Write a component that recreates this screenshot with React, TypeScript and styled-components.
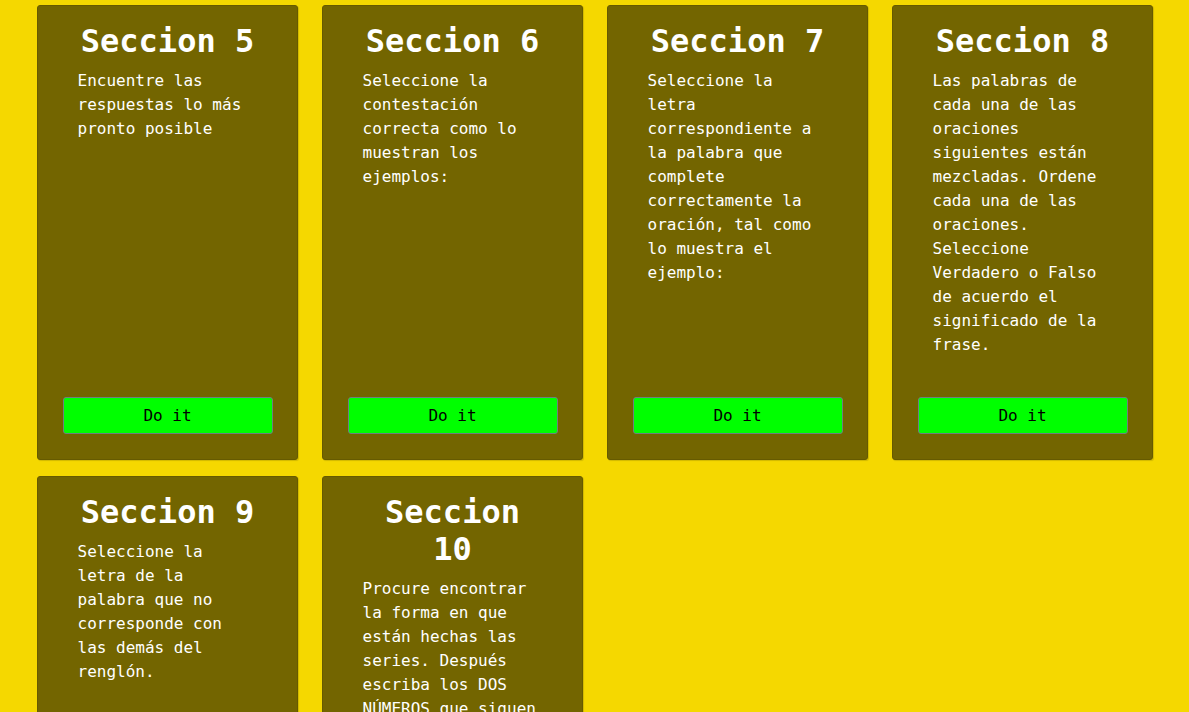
import React from "react";
import styled, { createGlobalStyle } from "styled-components";

const Global = createGlobalStyle`
  html, body {
    margin: 0;
    padding: 0;
    background: #f5d800;
    font-family: "DejaVu Sans Mono", "Liberation Mono", monospace;
  }
`;

const Grid = styled.main`
  display: grid;
  grid-template-columns: repeat(4, 261px);
  column-gap: 24px;
  row-gap: 16px;
  padding: 5px 36px 20px 37px;
`;

const Card = styled.section`
  display: flex;
  flex-direction: column;
  align-items: center;
  box-sizing: border-box;
  min-height: 455px;
  background: #736500;
  border: 1px solid #665a00;
  border-radius: 3px;
  box-shadow: 1px 1px 1px rgba(0, 0, 0, 0.15);
  color: #ffffff;
`;

const Title = styled.h2`
  width: 180px;
  margin: 17px 0 0;
  font-size: 32px;
  line-height: 37px;
  font-weight: bold;
  text-align: center;
`;

const Text = styled.p`
  width: 180px;
  margin: 9px 0 0;
  flex: 1;
  font-size: 16px;
  line-height: 24px;
`;

const Button = styled.button`
  width: 210px;
  height: 37px;
  margin: 40px 0 25px;
  background: #00ff00;
  border: 1px solid #6f7f7f;
  border-radius: 3px;
  color: #000;
  font-family: "DejaVu Sans Mono", "Liberation Mono", monospace;
  font-size: 16px;
  cursor: pointer;
`;

const sections = [
  { n: 5, text: "Encuentre las respuestas lo más pronto posible" },
  { n: 6, text: "Seleccione la contestación correcta como lo muestran los ejemplos:" },
  {
    n: 7,
    text: "Seleccione la letra correspondiente a la palabra que complete correctamente la oración, tal como lo muestra el ejemplo:",
  },
  {
    n: 8,
    text: "Las palabras de cada una de las oraciones siguientes están mezcladas. Ordene cada una de las oraciones. Seleccione Verdadero o Falso de acuerdo el significado de la frase.",
  },
  { n: 9, text: "Seleccione la letra de la palabra que no corresponde con las demás del renglón." },
  {
    n: 10,
    text: "Procure encontrar la forma en que están hechas las series. Después escriba los DOS NÚMEROS que siguen en cada una de ellas.",
  },
];

export default function App() {
  return (
    <>
      <Global />
      <Grid>
        {sections.map((s) => (
          <Card key={s.n}>
            <Title>Seccion {s.n}</Title>
            <Text>{s.text}</Text>
            <Button>Do it</Button>
          </Card>
        ))}
      </Grid>
    </>
  );
}
